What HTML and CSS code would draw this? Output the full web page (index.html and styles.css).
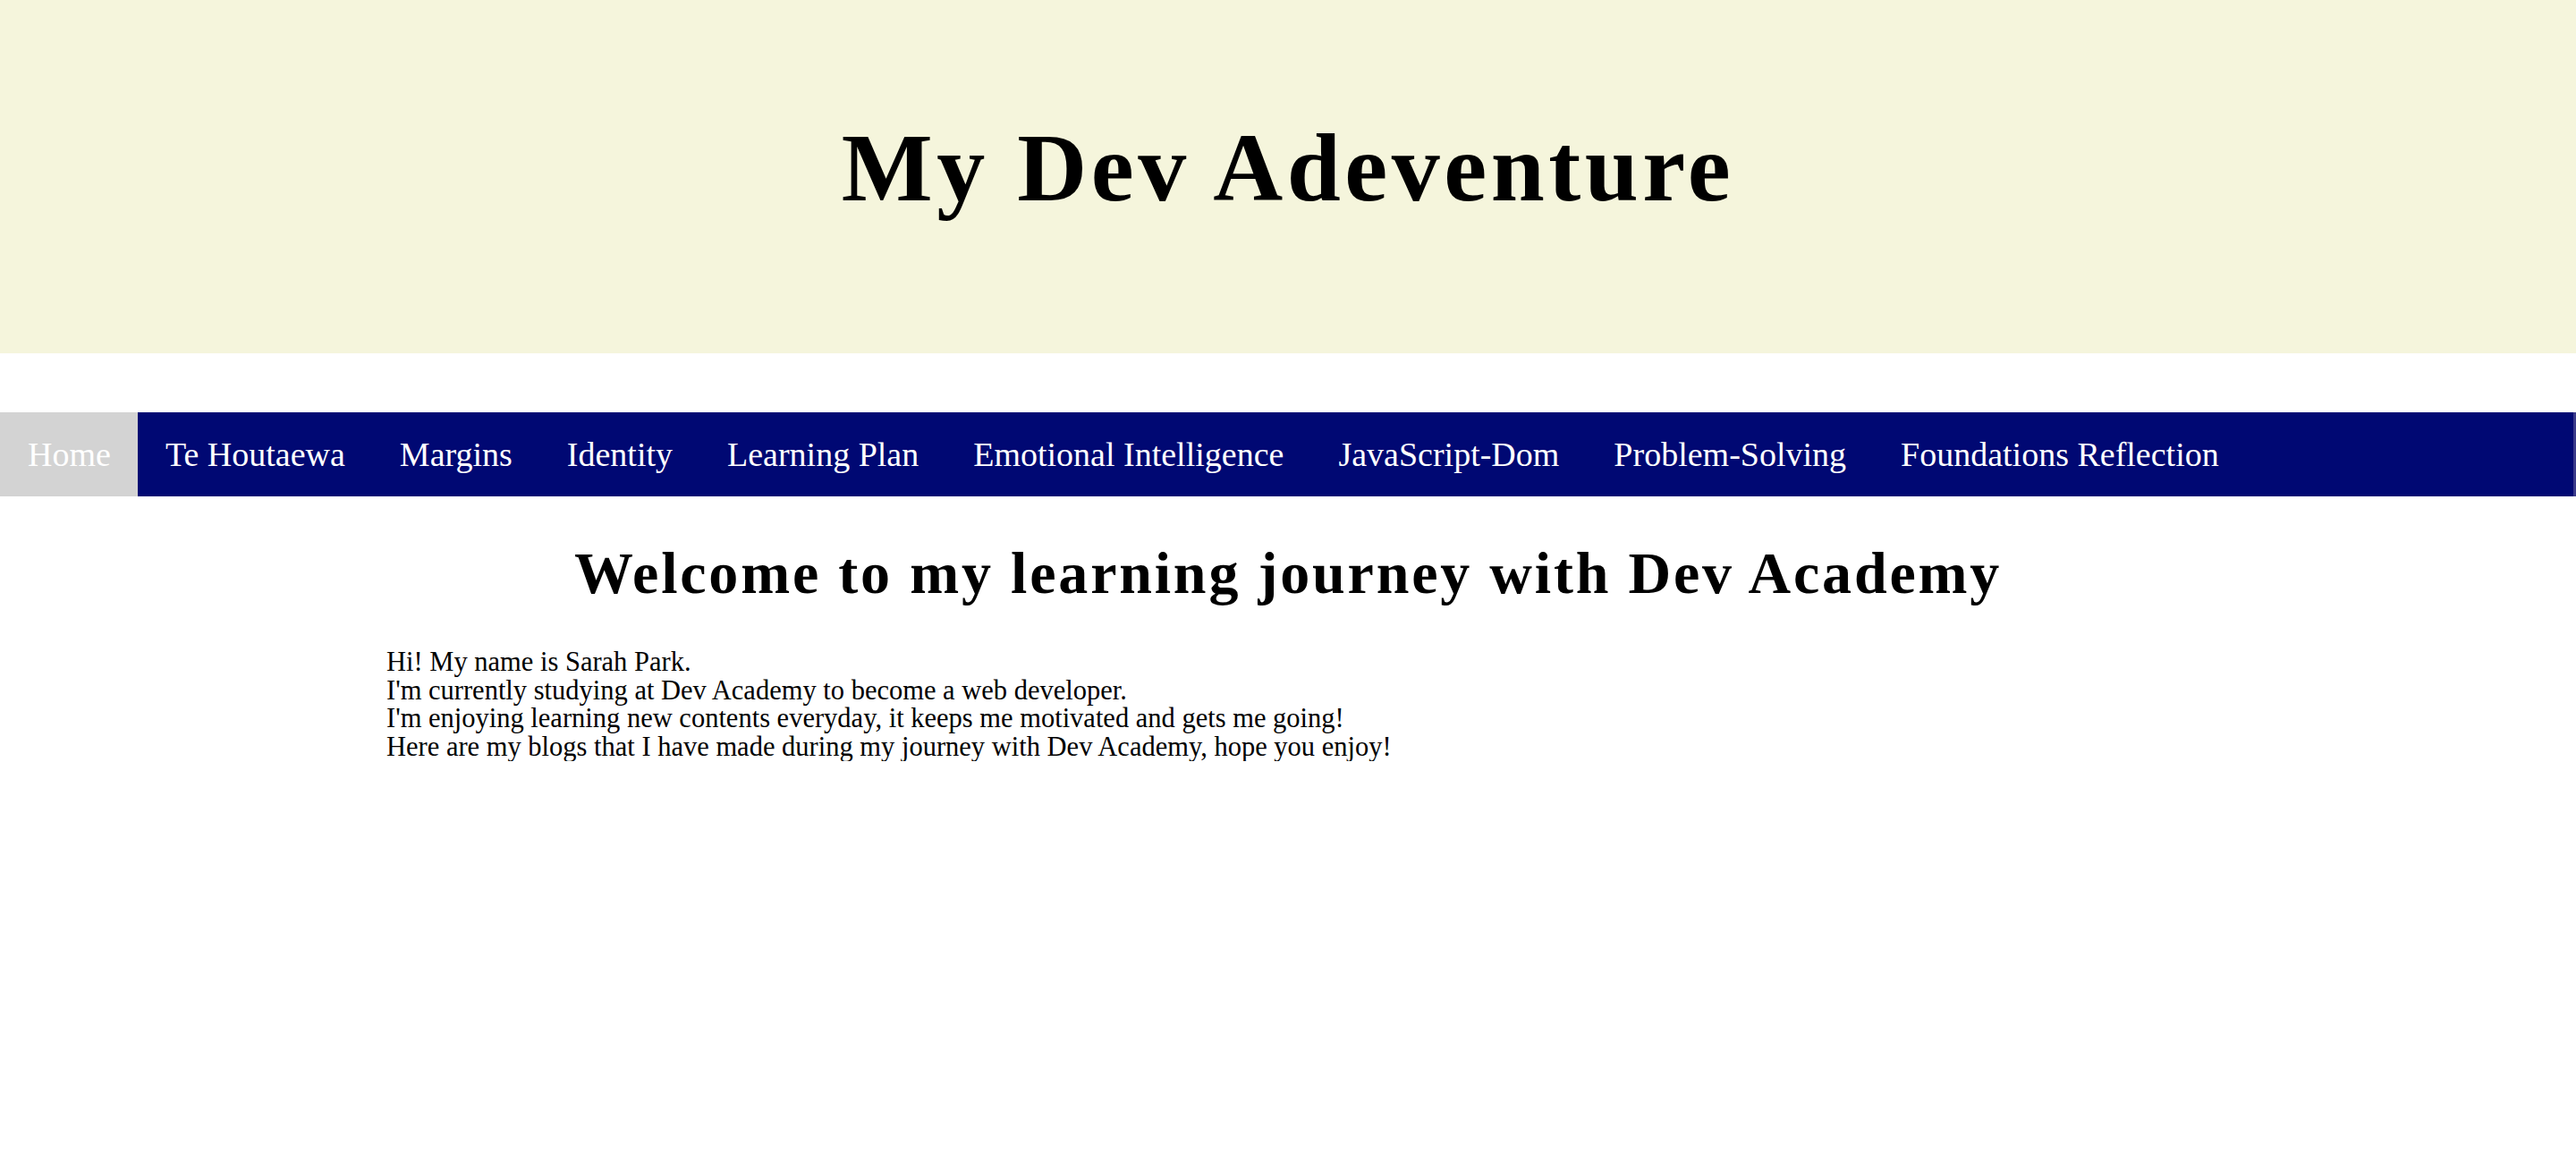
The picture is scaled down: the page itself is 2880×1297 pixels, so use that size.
FILE: index.html
```html
<!DOCTYPE html>
<html lang="en">
<head>
<meta charset="utf-8">
<title>My Dev Adeventure</title>
<link rel="stylesheet" href="styles.css">
</head>
<body>
<header class="banner">
  <h1 class="banner-title">My Dev Adeventure</h1>
</header>
<nav class="menu">
  <a class="menu-link is-active" href="#">Home</a>
  <a class="menu-link" href="#">Te Houtaewa</a>
  <a class="menu-link" href="#">Margins</a>
  <a class="menu-link" href="#">Identity</a>
  <a class="menu-link" href="#">Learning Plan</a>
  <a class="menu-link" href="#">Emotional Intelligence</a>
  <a class="menu-link" href="#">JavaScript-Dom</a>
  <a class="menu-link" href="#">Problem-Solving</a>
  <a class="menu-link" href="#">Foundations Reflection</a>
</nav>
<main class="content">
  <h2 class="welcome">Welcome to my learning journey with Dev Academy</h2>
  <p class="intro">Hi! My name is Sarah Park.<br>I'm currently studying at Dev Academy to become a web developer.<br>I'm enjoying learning new contents everyday, it keeps me motivated and gets me going!<br>Here are my blogs that I have made during my journey with Dev Academy, hope you enjoy!</p>
</main>
</body>
</html>
```
FILE: styles.css
```css
html, body {
  margin: 0;
  padding: 0;
  background: #ffffff;
  font-family: "Liberation Serif", "Times New Roman", serif;
  color: #000000;
}

.banner {
  box-sizing: border-box;
  height: 395px;
  padding-top: 126px;
  background: #f5f5dc;
  text-align: center;
}

.banner-title {
  margin: 0;
  font-size: 108px;
  font-weight: bold;
  letter-spacing: 4.5px;
  line-height: normal;
}

.menu {
  display: flex;
  margin-top: 66px;
  background: #000873;
  border-right: 3px solid #3a3a8a;
}

.menu-link {
  display: block;
  padding: 25px 30px 25px 31px;
  font-size: 38px;
  line-height: 44px;
  color: #ffffff;
  text-decoration: none;
}

.menu-link.is-active {
  background: #d3d3d3;
}

.content {
  padding-top: 48px;
}

.welcome {
  margin: 0;
  text-align: center;
  font-size: 66px;
  font-weight: bold;
  letter-spacing: 2.8px;
  line-height: normal;
}

.intro {
  margin: 46px 0 0 15%;
  font-size: 30.5px;
  line-height: 31.5px;
}
```
